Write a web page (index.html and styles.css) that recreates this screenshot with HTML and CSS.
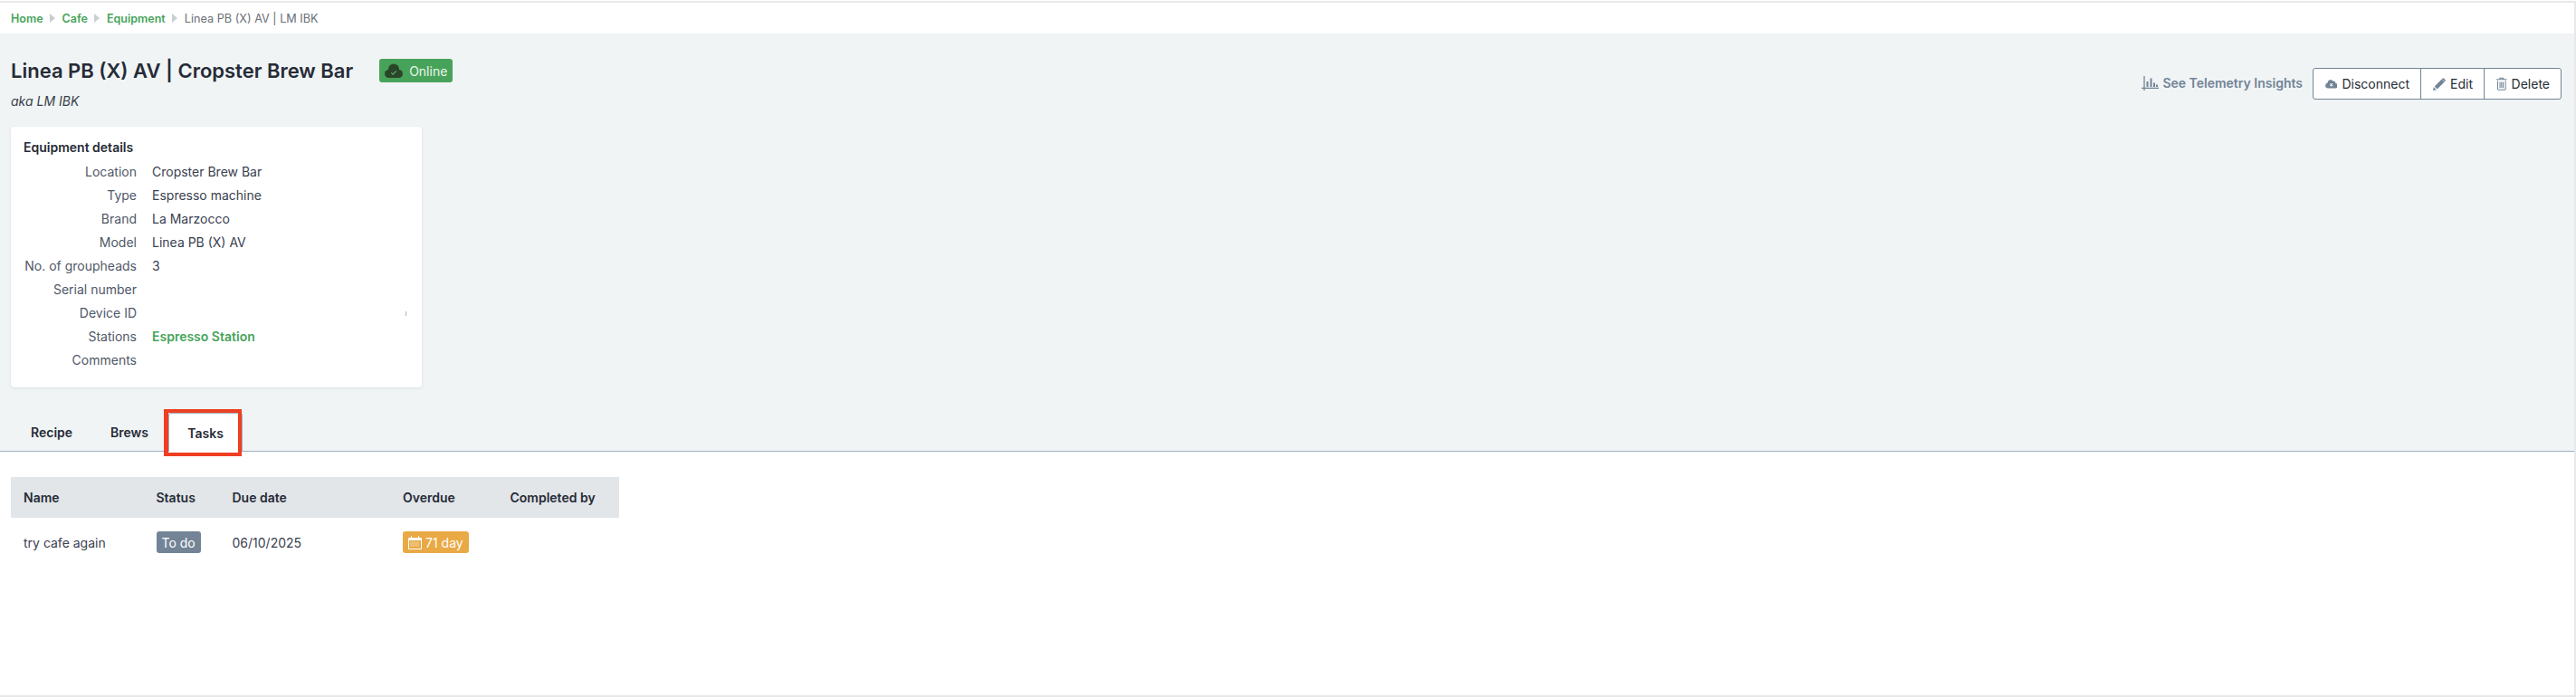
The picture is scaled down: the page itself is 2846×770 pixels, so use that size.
FILE: index.html
```html
<!DOCTYPE html>
<html lang="en">
<head>
<meta charset="utf-8">
<title>Linea PB (X) AV | Cropster Brew Bar</title>
<link rel="stylesheet" href="styles.css">
</head>
<body>
<div class="frame">
  <nav class="crumbs">
    <a href="#">Home</a><span class="sep"></span>
    <a href="#">Cafe</a><span class="sep"></span>
    <a href="#">Equipment</a><span class="sep"></span>
    <span class="current">Linea PB (X) AV | LM IBK</span>
  </nav>
  <section class="head">
    <div class="title-row">
      <div class="title-block">
        <div class="title-line">
          <h1>Linea PB (X) AV | Cropster Brew Bar</h1>
          <span class="online">
            <svg class="online-icon" viewBox="0 0 20 17"><g fill="#2a4527"><circle cx="4.500" cy="11.500" r="4.500"/><circle cx="10" cy="6.500" r="6"/><circle cx="15.500" cy="11.500" r="4.500"/><path d="M4.500 11h11v5h-11z"/></g><path fill="none" stroke="#5fae6c" stroke-width="1.100" d="M7.300 10.300l1.900 1.900 3.600-3.800"/></svg>
            Online
          </span>
        </div>
        <p class="aka">aka LM IBK</p>
      </div>
      <div class="actions">
        <a class="insights" href="#">
          <svg class="insights-icon" viewBox="0 0 19 16"><path fill="none" stroke="#728496" stroke-width="1.300" d="M3 0v16M0 13.300h19"/><path fill="#728496" d="M5.500 6h2v6h-2zM9.500 2.500h2V12h-2zM13 7.500h2V12h-2zM16 9.500h2V12h-2z"/></svg>
          See Telemetry Insights
        </a>
        <div class="btn-group">
          <button class="btn btn-disconnect"><svg class="ic-cloud" viewBox="0 0 16 12"><path fill="#728496" d="M13.300 5.300A2.300 2.300 0 0 0 10.200 2.600 4 4 0 0 0 3 4.400v.300A3.700 3.700 0 0 0 3.600 12h9a3.200 3.200 0 0 0 .7-6.700z"/><path stroke="#fff" stroke-width="1.200" d="M6.400 5.800l3.200 3.200M9.600 5.800L6.400 9"/></svg>Disconnect</button>
          <button class="btn btn-edit"><svg class="ic-pencil" viewBox="0 0 14 14"><path fill="#728496" d="M0 14l.8-3.700 3 3zM1.700 9.400L9.600 1.500l3 3-7.900 7.900zM10.400.7a1.300 1.300 0 0 1 1.800 0l1.200 1.200a1.300 1.300 0 0 1 0 1.800l-.5.500-3-3z"/></svg>Edit</button>
          <button class="btn btn-delete"><svg class="ic-trash" viewBox="0 0 12 15"><path fill="none" stroke="#728496" stroke-width="1.100" d="M1.500 4v9.500a1 1 0 0 0 1 1h7a1 1 0 0 0 1-1V4M0 2.500h12M4 2.500V1h4v1.500M4.200 5.500v7M6 5.500v7M7.800 5.500v7"/></svg>Delete</button>
        </div>
      </div>
    </div>
    <div class="card">
      <h2>Equipment details</h2>
      <dl class="details">
        <dt>Location</dt><dd>Cropster Brew Bar</dd>
        <dt>Type</dt><dd>Espresso machine</dd>
        <dt>Brand</dt><dd>La Marzocco</dd>
        <dt>Model</dt><dd>Linea PB (X) AV</dd>
        <dt>No. of groupheads</dt><dd>3</dd>
        <dt>Serial number</dt><dd></dd>
        <dt>Device ID</dt><dd class="clipped"><span class="tick"></span></dd>
        <dt>Stations</dt><dd><a href="#">Espresso Station</a></dd>
        <dt>Comments</dt><dd></dd>
      </dl>
    </div>
    <div class="tabs">
      <a class="tab tab-recipe" href="#">Recipe</a>
      <a class="tab tab-brews" href="#">Brews</a>
      <a class="tab active" href="#">Tasks</a>
    </div>
  </section>
  <main class="content">
    <table class="tasks">
      <thead>
        <tr><th class="c-name">Name</th><th class="c-status">Status</th><th class="c-due">Due date</th><th class="c-over">Overdue</th><th class="c-by">Completed by</th></tr>
      </thead>
      <tbody>
        <tr>
          <td>try cafe again</td>
          <td><span class="badge todo">To do</span></td>
          <td>06/10/2025</td>
          <td><span class="badge late"><svg class="ic-cal" viewBox="0 0 15 15"><path fill="none" stroke="#fff" stroke-width="1" d="M.5 2.500h14v12H.5zM3.500 0v3M11.500 0v3"/><path fill="#fff" d="M.5 2.500h14v2.500H.5z"/><path stroke="#fff" stroke-width="1" stroke-dasharray="1 1" d="M2.500 7h10M2.500 9h10M2.500 11h10"/></svg>71 day</span></td>
          <td></td>
        </tr>
      </tbody>
    </table>
  </main>
</div>
</body>
</html>
```
FILE: styles.css
```css
* { box-sizing: border-box; }
html, body { margin: 0; padding: 0; height: 100%; }
body { font-family: Inter, "Liberation Sans", sans-serif; font-size: 14px; color: #262b36; background: #fff; }
.frame { height: 769px; margin-top: 1px; border: 2px solid #e8e8e8; border-left: 0; display: flex; flex-direction: column; background: #fff; overflow: hidden; }
a { text-decoration: none; color: inherit; }

.crumbs { height: 34px; padding-left: 12px; display: flex; align-items: center; font-size: 12.5px; background: #fff; }
.crumbs a { color: #47a35a; font-weight: 600; }
.crumbs .sep { width: 0; height: 0; margin: 0 7.500px; border-left: 6px solid #c9ced3; border-top: 5px solid transparent; border-bottom: 5px solid transparent; }
.crumbs .current { color: #6a6f76; font-size: 12.700px; }

.head { background: #f0f4f5; height: 462px; padding: 28px 0 0 12px; display: flex; flex-direction: column; border-bottom: 1px solid #9fb0bf; }
.title-row { display: flex; justify-content: space-between; align-items: flex-start; padding-right: 14px; height: 75px; }
.title-line { display: flex; align-items: center; height: 26px; }
h1 { margin: 0; font-size: 22px; font-weight: 600; color: #262b36; line-height: 26px; }
.online { margin-left: 29px; height: 26px; width: 81px; background: #47a35a; border-radius: 3px; color: #eaf5ec; font-size: 14px; display: flex; align-items: center; justify-content: center; gap: 7px; }
.online-icon { width: 20px; height: 17px; flex: none; }
.aka { margin: 12px 0 0; font-size: 14px; font-style: italic; color: #3a3f4a; line-height: 17px; }

.actions { display: flex; align-items: center; margin-top: 10px; }
.insights { color: #728496; font-weight: 600; font-size: 14px; display: flex; align-items: center; gap: 4px; margin-right: 11px; margin-top: -2px; }
.insights-icon { width: 19px; height: 16px; }
.btn-group { display: flex; border: 1px solid #728496; border-radius: 3px; height: 35px; background: #fff; }
.btn { font: inherit; color: #262b36; background: none; border: 0; border-left: 1px solid #728496; padding: 0 12px 0 13px; display: flex; align-items: center; justify-content: center; gap: 5px; height: 100%; }
.btn:first-child { border-left: 0; }
.btn-disconnect { width: 118px; }
.btn-edit { width: 70px; }
.btn-delete { width: 85px; }
.ic-cloud { width: 15px; height: 11px; }
.ic-pencil { width: 14px; height: 14px; }
.ic-trash { width: 12px; height: 15px; }

.card { width: 454px; height: 288px; background: #fff; border-radius: 4px; box-shadow: 0 1px 3px rgba(60,70,80,.12); padding: 14px 14px 0; }
h2 { margin: 0; font-size: 14px; font-weight: 600; line-height: 17px; color: #262b36; }
.details { margin: 5px 0 0; display: grid; grid-template-columns: 125px 1fr; grid-auto-rows: 26px; column-gap: 17px; align-items: center; }
.details dt { text-align: right; color: #4f5868; }
.details dd { margin: 0; color: #3a4150; }
.details dd a { color: #47a35a; font-weight: 600; }
.details .clipped { display: flex; justify-content: flex-end; padding-right: 3px; }
.tick { width: 1px; height: 5px; background: #b5b5b5; margin-top: 2px; }

.tabs { display: flex; margin-top: auto; padding-left: 7px; height: 43px; margin-bottom: -1px; }
.tab { display: flex; align-items: center; padding: 0 14px; font-weight: 600; font-size: 14px; color: #262b36; border: 1px solid transparent; }
.tab-brews { margin-left: 12px; }
.tab.active { position: relative; background: #fff; width: 82px; justify-content: center; margin-left: 7px; padding: 0; border: 1px solid #9fb0bf; border-bottom: 0; border-radius: 3px 3px 0 0; }
.tab.active::after { content: ""; position: absolute; top: -5px; right: 0; bottom: -5px; left: -6px; border: 4px solid #ee3f22; border-left-width: 5px; }

.content { flex: 1; padding: 28px 0 0 12px; }
.tasks { border-collapse: collapse; table-layout: fixed; width: 672px; }
.tasks th { background: #e2e6e9; height: 45px; text-align: left; font-weight: 600; padding: 0 0 0 14px; color: #262b36; }
.tasks td { height: 54px; padding: 0 0 0 14px; color: #3a4150; }
.c-name { width: 146.500px; }
.c-status { width: 84px; }
.c-due { width: 188.500px; }
.c-over { width: 118.500px; }
.c-by { width: 134.500px; }
.badge { display: inline-flex; align-items: center; height: 24px; padding: 0 6px; border-radius: 3px; color: #fff; vertical-align: middle; }
.todo { background: #728496; }
.late { background: #e9a944; gap: 4px; padding: 0 6px; }
.ic-cal { width: 15px; height: 15px; }
```
